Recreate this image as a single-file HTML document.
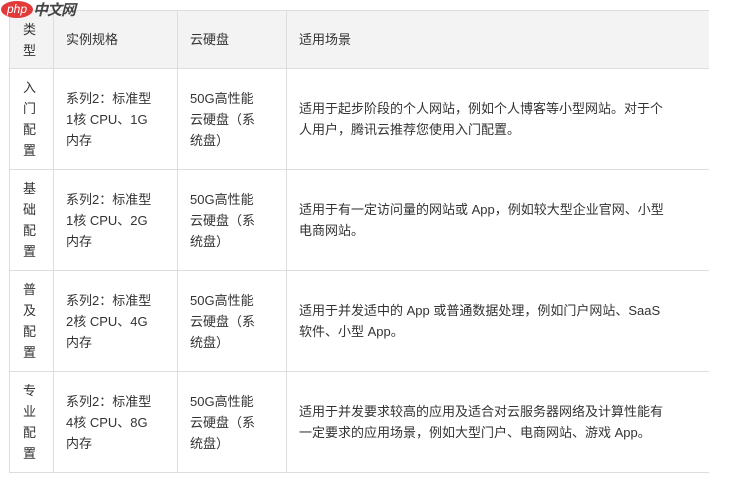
<!DOCTYPE html>
<html><head><meta charset="utf-8"><style>
body{margin:0;background:#fff;width:738px;height:477px;overflow:hidden;position:relative;font-family:"Liberation Sans","Noto Sans CJK SC",sans-serif;font-size:13px;color:#333}
table{position:absolute;left:9px;top:10px;border-collapse:collapse;width:700px}
td{border:1px solid #ddd;border-right:none;vertical-align:middle;line-height:21px;padding:0 0 0 12px}
tr.h td{background:#f3f3f3;height:57px}
tr.r td{height:100px}
td.c0{width:30px;padding-left:13px}
.logo{position:absolute;left:0;top:0;height:22px;width:90px;z-index:2;white-space:nowrap}
</style></head><body>
<div class="logo">
<div style="position:absolute;left:1px;top:1px;width:32px;height:17px;border-radius:50%;background:#e03a3a;color:#fff;font-size:12px;font-style:italic;line-height:16px;text-align:center">php</div>
<div style="position:absolute;left:33px;top:-1px;font-size:15px;font-style:italic;font-weight:bold;color:#444;letter-spacing:-1px;white-space:nowrap">中文网</div>
</div>
<table>
<tr class="h"><td class="c0">类<br>型</td><td style="width:111px">实例规格</td><td style="width:96px">云硬盘</td><td>适用场景</td></tr>
<tr class="r"><td class="c0">入<br>门<br>配<br>置</td><td>系列2：标准型<br>1核 CPU、1G<br>内存</td><td>50G高性能<br>云硬盘（系<br>统盘）</td><td>适用于起步阶段的个人网站，例如个人博客等小型网站。对于个<br>人用户，腾讯云推荐您使用入门配置。</td></tr>
<tr class="r"><td class="c0">基<br>础<br>配<br>置</td><td>系列2：标准型<br>1核 CPU、2G<br>内存</td><td>50G高性能<br>云硬盘（系<br>统盘）</td><td>适用于有一定访问量的网站或 App，例如较大型企业官网、小型<br>电商网站。</td></tr>
<tr class="r"><td class="c0">普<br>及<br>配<br>置</td><td>系列2：标准型<br>2核 CPU、4G<br>内存</td><td>50G高性能<br>云硬盘（系<br>统盘）</td><td>适用于并发适中的 App 或普通数据处理，例如门户网站、SaaS<br>软件、小型 App。</td></tr>
<tr class="r"><td class="c0">专<br>业<br>配<br>置</td><td>系列2：标准型<br>4核 CPU、8G<br>内存</td><td>50G高性能<br>云硬盘（系<br>统盘）</td><td>适用于并发要求较高的应用及适合对云服务器网络及计算性能有<br>一定要求的应用场景，例如大型门户、电商网站、游戏 App。</td></tr>
</table>
</body></html>
